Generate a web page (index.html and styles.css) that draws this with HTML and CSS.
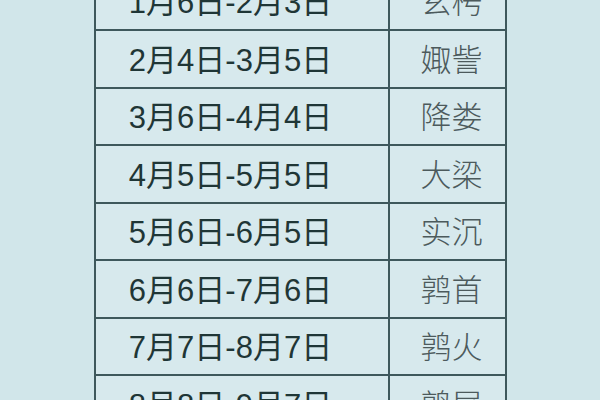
FILE: index.html
```html
<!DOCTYPE html>
<html lang="zh">
<head>
<meta charset="utf-8">
<title>星次</title>
<link rel="stylesheet" href="styles.css">
</head>
<body>
<div class="page">
  <div class="table">
    <div class="cell date">1月6日-2月3日</div><div class="cell name">玄枵</div>
    <div class="cell date">2月4日-3月5日</div><div class="cell name">娵訾</div>
    <div class="cell date">3月6日-4月4日</div><div class="cell name">降娄</div>
    <div class="cell date">4月5日-5月5日</div><div class="cell name">大梁</div>
    <div class="cell date">5月6日-6月5日</div><div class="cell name">实沉</div>
    <div class="cell date">6月6日-7月6日</div><div class="cell name">鹑首</div>
    <div class="cell date">7月7日-8月7日</div><div class="cell name">鹑火</div>
    <div class="cell date">8月8日-9月7日</div><div class="cell name">鹑尾</div>
  </div>
</div>
</body>
</html>
```
FILE: styles.css
```css
html, body {
  margin: 0;
  padding: 0;
  background: #d1e6ea;
  width: 600px;
  height: 400px;
  overflow: hidden;
}
.page {
  padding-left: 94px;
}
.table {
  display: grid;
  grid-template-columns: 294px 115px;
  width: 413px;
  box-sizing: border-box;
  margin-top: -26.5px;
  border-left: 2px solid #3e585c;
  border-right: 2px solid #3e585c;
  background: #d7e9ed;
}
.cell {
  height: 57.5px;
  box-sizing: border-box;
  border-bottom: 2px solid #3e585c;
  display: flex;
  align-items: center;
  justify-content: center;
  font-family: "Liberation Sans", "Noto Sans CJK SC", sans-serif;
  font-size: 31px;
  line-height: 1;
  padding-top: 3px;
}
.date {
  border-right: 2px solid #3e585c;
  color: #1f3636;
  padding-right: 23px;
}
.name {
  color: #4c5a5c;
  padding-left: 8px;
  font-size: 31px;
  font-weight: 300;
}
```
